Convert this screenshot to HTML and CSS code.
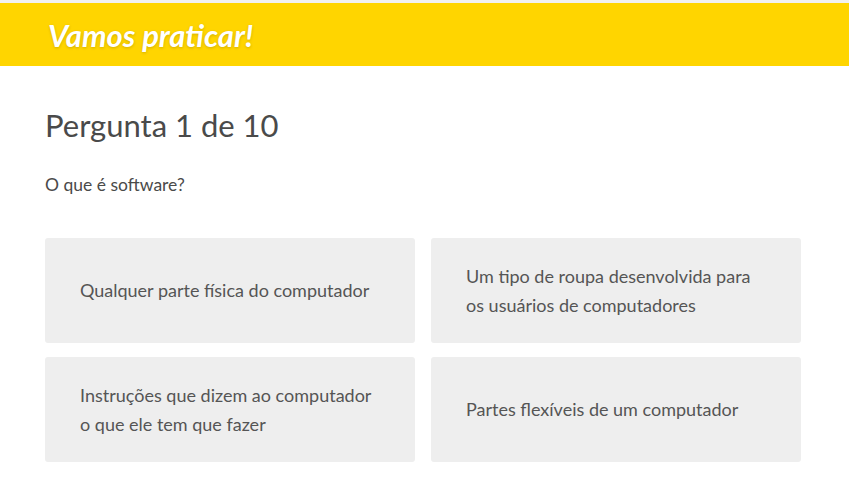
FILE: index.html
```html
<!DOCTYPE html>
<html lang="pt">
<head>
<meta charset="utf-8">
<title>Vamos praticar!</title>
<link rel="stylesheet" href="styles.css">
</head>
<body>
<header class="banner">
  <h1 class="banner-title">Vamos praticar!</h1>
</header>
<main class="quiz">
  <h2 class="quiz-count">Pergunta 1 de 10</h2>
  <p class="quiz-question">O que é software?</p>
  <div class="answers">
    <button class="answer">Qualquer parte física do computador</button>
    <button class="answer">Um tipo de roupa desenvolvida para os usuários de computadores</button>
    <button class="answer">Instruções que dizem ao computador o que ele tem que fazer</button>
    <button class="answer">Partes flexíveis de um computador</button>
  </div>
</main>
</body>
</html>
```

FILE: styles.css
```css
* { box-sizing: border-box; }
body {
  margin: 0;
  border-top: 3px solid #f1f1f1;
  background: #fff;
  font-family: Lato, "Open Sans", sans-serif;
  color: #4a4a4a;
}
.banner {
  background: #ffd500;
  height: 63px;
  display: flex;
  align-items: center;
  padding-left: 48px;
}
.banner-title {
  margin: 0;
  color: #fff;
  font-size: 31px;
  font-weight: 700;
  font-style: italic;
  text-shadow: 0 1px 3px rgba(0,0,0,0.18);
}
.quiz {
  padding: 41px 48px 0 45px;
}
.quiz-count {
  margin: 0;
  font-size: 31px;
  font-weight: 400;
  line-height: 36px;
  color: #4a4a4a;
}
.quiz-question {
  margin: 30px 0 0;
  font-size: 17.5px;
  line-height: 24px;
  color: #4a4a4a;
}
.answers {
  margin-top: 41px;
  display: grid;
  grid-template-columns: 1fr 1fr;
  column-gap: 16px;
  row-gap: 14px;
}
.answer {
  height: 105px;
  background: #eeeeee;
  border: none;
  border-radius: 3px;
  padding: 0 35px;
  text-align: left;
  font-family: inherit;
  font-size: 18px;
  line-height: 29px;
  color: #555;
}
```
